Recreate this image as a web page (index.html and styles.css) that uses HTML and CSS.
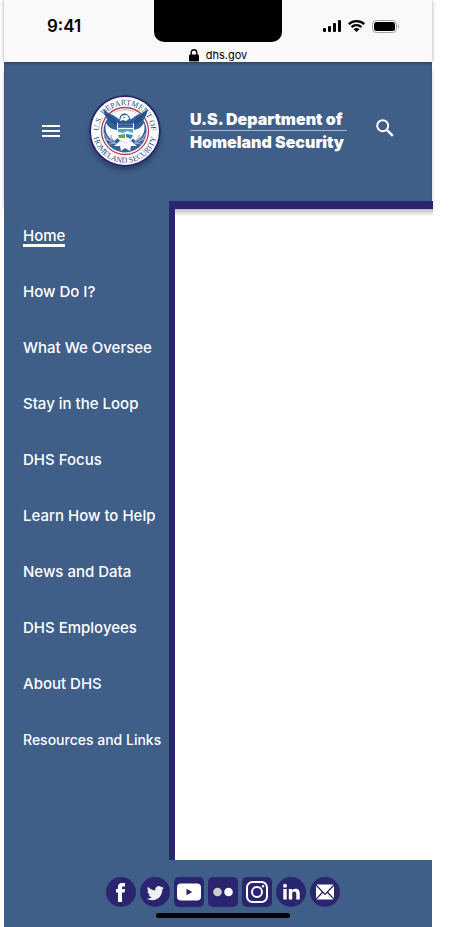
FILE: index.html
```html
<!DOCTYPE html>
<html lang="en">
<head>
  <meta charset="UTF-8" />
  <meta name="viewport" content="width=device-width, initial-scale=1.0" />
  <title>U.S. Department of Homeland Security</title>
  <link rel="stylesheet" href="styles.css">
</head>
<body>
  <div class="phone">
    <div class="status-bar">
      <div class="status-row">
        <span class="clock">9:41</span>
        <div class="notch"></div>
        <div class="status-icons">
          <svg width="18" height="12" viewBox="0 0 18 12">
            <rect x="0" y="8" width="3" height="4" rx="1" />
            <rect x="5" y="6" width="3" height="6" rx="1" />
            <rect x="10" y="3" width="3" height="9" rx="1" />
            <rect x="15" y="0" width="3" height="12" rx="1" />
          </svg>
          <svg width="17" height="12" viewBox="0 0 17 12">
            <path d="M8.5 0C5.300 0 2.300 1.200 0 3.300L1.500 4.900A10.300 10.300 0 0 1 15.500 4.900L17 3.300A12.500 12.500 0 0 0 8.500 0Z" />
            <path d="M8.500 4.100C6.300 4.100 4.300 4.900 2.800 6.300L4.300 7.900A6.200 6.200 0 0 1 12.700 7.900L14.200 6.300A8.300 8.300 0 0 0 8.500 4.100Z" />
            <path d="M8.500 8.100C7.300 8.100 6.300 8.500 5.500 9.200L8.500 12L11.500 9.200A4.500 4.500 0 0 0 8.500 8.100Z" />
          </svg>
          <svg width="27" height="13" viewBox="0 0 27 13">
            <rect x=".5" y=".5" width="24" height="12" rx="3.800" fill="none" stroke="#a3a3a3" />
            <rect x="2" y="2" width="21" height="9" rx="2.500" />
            <path d="M26 4.500v4c1.300-.6 1.300-3.400 0-4z" fill="#a3a3a3" />
          </svg>
        </div>
      </div>
      <div class="url">
        <svg width="10" height="13" viewBox="0 0 10 13">
          <rect x="0" y="5.500" width="10" height="7" rx="1.200" />
          <path d="M2.200 6V3.600a2.800 2.800 0 0 1 5.600 0V6" fill="none" stroke="#000" stroke-width="1.400" />
        </svg>
        <span>dhs.gov</span>
      </div>
    </div>

    <header class="header">
      <button class="icon-btn" type="button" aria-label="Menu">
        <svg width="18" height="14" viewBox="0 0 18 14" fill="#fff">
          <path d="M0 1h18v2H0zM0 6h18v2H0zM0 11h18v2H0z" />
        </svg>
      </button>
      <svg class="seal" width="72" height="72" viewBox="0 0 72 72">
        <defs>
          <path id="arc-top" d="M15 51.500A26 26 0 1 1 57 51.500" />
          <path id="arc-bottom" d="M6.200 24.200A32 32 0 1 0 65.800 24.200" />
        </defs>
        <circle cx="36" cy="36" r="35" fill="#fff" stroke="#29256f" stroke-width="2" />
        <circle cx="36" cy="36" r="23.500" fill="#fff" stroke="#b93a49" stroke-width="1.300" />
        <circle cx="36" cy="36" r="21.500" fill="#34629a" />
        <!-- eagle -->
        <path d="M20 22C23 18 29 15 36 15s13 3 16 7l-9 5-3-6-4-2-5 2-1 5z" fill="#fff" />
        <path d="M14 14C15 19 17 24 21 28C24 32 28 33 30 33H42C46 33 49 31 52 28C56 24 58 19 59 14C54 18 49 19 45 22L41 25L39 20C37 18 34 18 32 20L31 25L27 22C23 19 18 18 14 14Z" fill="#2f5f98" />
        <path d="M17 19l10 7M20 24l8 5M56 19l-10 7M53 24l-8 5" stroke="#173f72" stroke-width="1" fill="none" />
        <path d="M32 22c1-2 5-3 7-1l1 3-3 2-3-1-3 1z" fill="#fff" />
        <circle cx="35" cy="22.500" r=".7" fill="#173f72" />
        <path d="M17 28c3 5 7 7 12 7v8l-4 3c-6-3-10-9-8-18zM55 28c-3 5-7 7-12 7v8l4 3c6-3 10-9 8-18z" fill="#fff" />
        <path d="M28 28h17v12c0 4-4 7-8 8-5-1-9-4-9-8z" fill="#fff" />
        <path d="M29 28h15v5H29z" fill="#5378a5" />
        <path d="M29 28l15 0M29 30.500h15" stroke="#173f72" stroke-width=".7" />
        <path d="M29 34h15v4l-6-2-4 2-5-1z" fill="#4ba9d6" />
        <path d="M29 40l7-1v4h-6z" fill="#65a844" />
        <path d="M37 39l7 1-2 4-5-2z" fill="#347fb8" />
        <path d="M31 46l-6 5h6l1 5 4-3 5 3 1-5h6l-6-5-5 2z" fill="#fff" />
        <path d="M15 38c3 7 8 10 13 11M57 38c-3 7-8 10-13 11M16 44l6 2 0-6M20 49l6-1-3-5M56 44l-6 2 0-6M52 49l-6-1 3-5" stroke="#9aacc3" stroke-width="1.200" fill="none" />
        <text class="seal-text"><textPath href="#arc-top" startOffset="50%" text-anchor="middle">U.S. DEPARTMENT OF</textPath></text>
        <text class="seal-text"><textPath href="#arc-bottom" startOffset="50%" text-anchor="middle">HOMELAND SECURITY</textPath></text>
      </svg>
      <h1 class="title">
        <span class="title-top">U.S. Department of</span>
        <span>Homeland Security</span>
      </h1>
      <button class="icon-btn search" type="button" aria-label="Search">
        <svg width="18" height="18" viewBox="0 0 18 18" fill="none" stroke="#fff" stroke-width="2">
          <circle cx="6.700" cy="6.700" r="5.500" />
          <path d="M10.800 10.800l6 6" stroke-width="2.400" />
        </svg>
      </button>
    </header>

    <div class="main">
      <nav class="menu">
        <a class="active" href="#">Home</a>
        <a href="#">How Do I?</a>
        <a href="#">What We Oversee</a>
        <a href="#">Stay in the Loop</a>
        <a href="#">DHS Focus</a>
        <a href="#">Learn How to Help</a>
        <a href="#">News and Data</a>
        <a href="#">DHS Employees</a>
        <a href="#">About DHS</a>
        <a class="long" href="#">Resources and Links</a>
      </nav>
      <main class="content"></main>
    </div>

    <footer class="footer">
      <div class="social">
        <a class="round" href="#" aria-label="Facebook">
          <svg width="30" height="30" viewBox="0 0 30 30" fill="#fff">
            <path d="M12 25V15.500H10V12h2V9.800C12 7.200 13.500 6 16 6H19v3.600h-1.700c-1 0-1.300.4-1.300 1.200V12h3l-.4 3.500H16V25z" />
          </svg>
        </a>
        <a class="round" href="#" aria-label="Twitter">
          <svg width="30" height="30" viewBox="0 0 30 30" fill="#eef0f3">
            <path d="M24 10.800c-.6.3-1.300.5-2 .5.8-.4 1.200-1.100 1.500-1.900-.7.400-1.400.7-2.200.8a3.600 3.600 0 0 0-6.100 3.200c-3-.1-5.500-1.500-7.300-3.600-.9 1.600-.5 3.600 1.100 4.700-.6 0-1.100-.2-1.600-.4 0 1.700 1.200 3.100 2.800 3.500-.5.100-1 .2-1.600.1.500 1.400 1.800 2.400 3.300 2.400-1.500 1.200-3.300 1.700-5.200 1.500 1.600 1 3.500 1.600 5.500 1.600 6.500 0 10.200-5.500 10-10.500.7-.5 1.300-1.100 1.800-1.900z" />
          </svg>
        </a>
        <a href="#" aria-label="YouTube">
          <svg width="30" height="30" viewBox="0 0 30 30">
            <rect x="3" y="6.500" width="24" height="17" rx="4" fill="#fff" />
            <path d="M12.500 11.700v6.600l5.800-3.300z" fill="#29256f" />
          </svg>
        </a>
        <a href="#" aria-label="Flickr">
          <svg width="30" height="30" viewBox="0 0 30 30">
            <circle cx="9.500" cy="15" r="4.300" fill="#cfcfcf" />
            <circle cx="20.500" cy="15" r="4.300" fill="#fff" />
          </svg>
        </a>
        <a href="#" aria-label="Instagram">
          <svg width="30" height="30" viewBox="0 0 30 30" fill="none" stroke="#fff" stroke-width="2">
            <rect x="5" y="5" width="20" height="20" rx="5.500" />
            <circle cx="15" cy="15" r="5" />
            <circle cx="21" cy="9.200" r="1.200" fill="#fff" stroke="none" />
          </svg>
        </a>
        <a class="round" href="#" aria-label="LinkedIn">
          <svg width="30" height="30" viewBox="0 0 30 30" fill="#fff">
            <circle cx="9" cy="8.700" r="2" />
            <path d="M7.300 12h3.400v10.500H7.300zM12.800 12H16v1.500c.6-1 1.700-1.800 3.400-1.800 3.400 0 4.300 2 4.300 5v5.800h-3.400v-5.200c0-1.500-.2-2.900-1.900-2.900-1.800 0-2.200 1.300-2.200 2.900v5.200h-3.400z" />
          </svg>
        </a>
        <a class="round" href="#" aria-label="Email">
          <svg width="30" height="30" viewBox="0 0 30 30" fill="#fff">
            <path d="M6.500 7.500h17L15 16.500zM6 9l5.800 6L6 21.200zM24 9l-5.800 6 5.800 6.200zM12.800 16l2.200 2.300 2.200-2.300 6.300 6.500h-17z" />
          </svg>
        </a>
      </div>
      <div class="home-indicator"></div>
    </footer>
  </div>
</body>
</html>
```
FILE: styles.css
```css
* {
  box-sizing: border-box;
  margin: 0;
  padding: 0;
}
body {
  font-family: Inter, "Liberation Sans", sans-serif;
  background-color: #fff;
  padding: 0 19px 0 4px;
}
svg {
  display: block;
}
.phone {
  display: flex;
  flex-direction: column;
  min-height: 100vh;
}

/* status bar */
.status-bar {
  background-color: #f9f9f9;
  box-shadow: 0 0 4px rgba(0, 0, 0, 0.35);
}
.status-row {
  display: grid;
  grid-template-columns: 1fr 128px 1fr;
}
.clock {
  padding: 16px 0 0 43px;
  font-size: 17px;
  line-height: 20px;
  font-weight: 600;
}
.notch {
  height: 42px;
  background-color: #000;
  border-radius: 0 0 10px 10px;
}
.status-icons {
  display: flex;
  justify-content: flex-end;
  align-items: center;
  gap: 7px;
  height: 20px;
  margin-top: 16px;
  padding-right: 33px;
}
.url {
  display: flex;
  justify-content: center;
  align-items: center;
  gap: 7px;
  margin-top: 7px;
  font-size: 11px;
  line-height: 13px;
}

/* header */
.header {
  display: flex;
  justify-content: space-between;
  align-items: center;
  position: relative;
  height: 139px;
  padding: 0 38px 2px;
  background-color: #3f5e88;
  box-shadow: 0 8px 4px rgba(0, 0, 0, 0.2), inset 0 2px 2px rgba(0, 0, 0, 0.2);
}
.icon-btn {
  border: none;
  background: none;
  cursor: pointer;
}
.search {
  padding-bottom: 6px;
}
.seal {
  border-radius: 50%;
  box-shadow: 0 4px 4px rgba(0, 0, 0, 0.25);
}
.seal-text {
  font-family: "Liberation Serif", serif;
  font-size: 8px;
  fill: #1f4f8c;
}
.title {
  min-width: 157px;
  color: #fff;
  font-size: 16px;
  line-height: 22px;
  font-weight: 900;
  white-space: nowrap;
}
.title span {
  display: block;
}
.title .title-top {
  border-bottom: 1px solid #a5b3c8;
}

/* menu and page content */
.main {
  display: flex;
  flex: 1;
  position: relative;
  margin-right: -1px;
}
.menu {
  display: flex;
  flex-direction: column;
  align-items: flex-start;
  gap: 35px;
  width: 165px;
  padding: 25px 0 25px 19px;
  background-color: #3f5e88;
}
.menu a {
  color: #fff;
  padding-top: 2px;
  font-size: 15px;
  line-height: 16px;
  font-weight: 500;
  text-decoration: none;
  white-space: nowrap;
  border-bottom: 3px solid transparent;
}
.menu .active {
  border-bottom-color: #fff;
}
.menu .long {
  font-size: 14px;
}
.content {
  flex: 1;
  background: linear-gradient(#bbb, #fff 7px) no-repeat;
  border-top: 8px solid #29256f;
  border-left: 6px solid #29256f;
}

/* footer */
.footer {
  display: flex;
  flex-direction: column;
  align-items: center;
  gap: 6px;
  position: relative;
  padding: 17px 0 9px 10px;
  background-color: #3f5e88;
}
.social {
  display: flex;
  gap: 4px;
}
.social a {
  background-color: #29256f;
  border-radius: 5px;
}
.social .round {
  border-radius: 50%;
}
.home-indicator {
  width: 134px;
  height: 5px;
  border-radius: 3px;
  background-color: #000;
}
```
